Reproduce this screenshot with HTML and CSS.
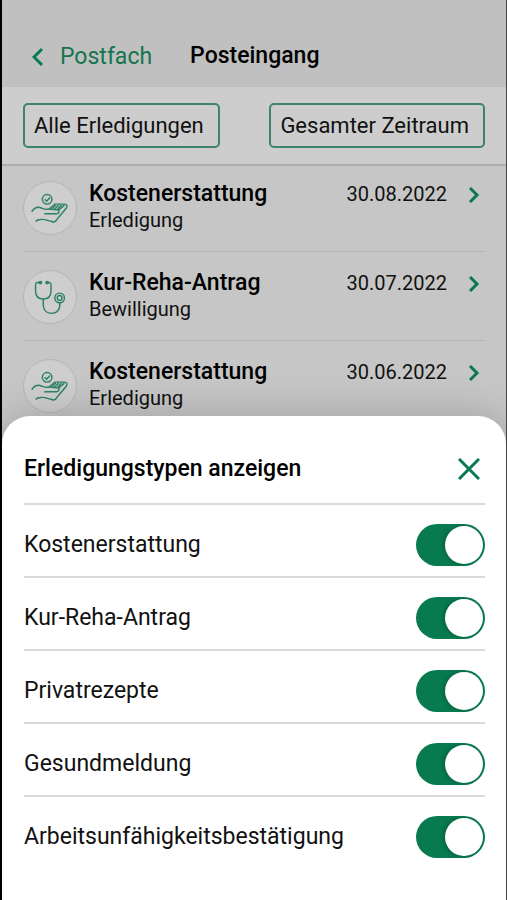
FILE: index.html
```html
<!DOCTYPE html>
<html lang="de">

<head>
    <meta charset="UTF-8" />
    <meta name="viewport" content="width=device-width, initial-scale=1.0" />
    <title>Posteingang</title>
    <link rel="stylesheet" href="styles.css">
</head>

<body>

    <!-- Icons -->
    <svg class="sprite" aria-hidden="true">
        <symbol id="icon-hand" viewBox="0 0 54 54">
            <circle cx="24" cy="18" r="5" />
            <path d="M21.5 18l2 2 3.5-4" />
            <path d="M8 31c2-4 6-6 10-4 3 1 5 2 8 1" />
            <path d="M26 28l6-5h10c3 0 3 2 2 4L34 39c-1 2-3 3-5 2-5-1-8-3-12-2-2 0-4 1-5 2" />
            <path d="M21 33h12c3 0 4-2 3-4l-10-1M36 29l6-5" />
            <path d="M29 28l4-4M32 28l4-4M35 28l4-4" />
        </symbol>
        <symbol id="icon-stethoscope" viewBox="0 0 54 54">
            <path d="M17 12h-3c-2 0-2 1-2 3v6c0 5 3 8 8 8s8-3 8-8v-6c0-2 0-3-2-3h-3" />
            <circle class="dot" cx="17" cy="12" r="2" />
            <circle class="dot" cx="24" cy="12" r="2" />
            <path d="M20 29v6c0 6 4 9 9 9s9-4 8-11" />
            <circle cx="37" cy="28" r="5" />
            <circle cx="37" cy="28" r="2.5" />
        </symbol>
        <symbol id="icon-chevron" viewBox="0 0 12 18">
            <path d="M2 2l7 7-7 7" />
        </symbol>
    </svg>

    <div class="screen">
        <header class="header">
            <a href="#" class="back">
                <svg class="back-icon" viewBox="0 0 12 20" aria-hidden="true"><path d="M10 2l-8 8 8 8" /></svg>
                Postfach
            </a>
            <h1>Posteingang</h1>
        </header>

        <div class="filters">
            <button type="button" class="filter-btn">Alle Erledigungen</button>
            <button type="button" class="filter-btn">Gesamter Zeitraum</button>
        </div>

        <ul class="messages">
            <li>
                <a href="#" class="message">
                    <svg class="avatar" aria-hidden="true"><use href="#icon-hand" /></svg>
                    <span class="message-text">
                        <strong>Kostenerstattung</strong>
                        <span>Erledigung</span>
                    </span>
                    <span class="date">30.08.2022</span>
                    <svg class="chevron" aria-hidden="true"><use href="#icon-chevron" /></svg>
                </a>
            </li>
            <li>
                <a href="#" class="message">
                    <svg class="avatar" aria-hidden="true"><use href="#icon-stethoscope" /></svg>
                    <span class="message-text">
                        <strong>Kur-Reha-Antrag</strong>
                        <span>Bewilligung</span>
                    </span>
                    <span class="date">30.07.2022</span>
                    <svg class="chevron" aria-hidden="true"><use href="#icon-chevron" /></svg>
                </a>
            </li>
            <li>
                <a href="#" class="message">
                    <svg class="avatar" aria-hidden="true"><use href="#icon-hand" /></svg>
                    <span class="message-text">
                        <strong>Kostenerstattung</strong>
                        <span>Erledigung</span>
                    </span>
                    <span class="date">30.06.2022</span>
                    <svg class="chevron" aria-hidden="true"><use href="#icon-chevron" /></svg>
                </a>
            </li>
        </ul>

        <section class="sheet">
            <div class="sheet-header">
                <h2>Erledigungstypen anzeigen</h2>
                <button type="button" class="close-btn" aria-label="Schließen">
                    <svg viewBox="0 0 22 22" aria-hidden="true"><path d="M1 1l20 20M21 1L1 21" /></svg>
                </button>
            </div>
            <label class="option">Kostenerstattung <input type="checkbox" class="toggle" checked></label>
            <label class="option">Kur-Reha-Antrag <input type="checkbox" class="toggle" checked></label>
            <label class="option">Privatrezepte <input type="checkbox" class="toggle" checked></label>
            <label class="option">Gesundmeldung <input type="checkbox" class="toggle" checked></label>
            <label class="option">Arbeitsunfähigkeitsbestätigung <input type="checkbox" class="toggle" checked></label>
        </section>
    </div>

</body>

</html>
```

FILE: styles.css
```css
* {
    box-sizing: border-box;
}

body {
    margin: 0;
    font-family: Roboto, sans-serif;
    font-size: 23px;
    color: #111;
}

h1,
h2 {
    margin: 0;
    font-size: 23px;
    font-weight: 500;
    color: #000;
}

a {
    color: inherit;
    text-decoration: none;
}

svg {
    fill: none;
    stroke: #087a50;
}

.sprite {
    display: none;
}

.screen {
    position: relative;
    height: 100vh;
    overflow: hidden;
    background: #c6c6c6;
    border-left: 2px solid #000;
    border-right: 1px solid #444;
}

.header {
    display: flex;
    align-items: flex-end;
    gap: 38px;
    height: 87px;
    padding: 0 30px 15px;
    background: #c0c0c0;
}

.header h1 {
    line-height: 32px;
}

.back {
    display: flex;
    align-items: center;
    gap: 16px;
    line-height: 30px;
    color: #16744f;
}

.back-icon {
    width: 12px;
    height: 20px;
    stroke-width: 3;
}

.filters {
    display: flex;
    justify-content: space-between;
    padding: 16px 21px;
    background: #cdcdcd;
    border-bottom: 2px solid #adadad;
}

.filter-btn {
    height: 45px;
    padding: 0 14px 0 9px;
    font: inherit;
    font-size: 22px;
    color: #111;
    background: none;
    border: 2px solid #3f8468;
    border-radius: 5px;
}

/* Messages */

.messages {
    margin: 0;
    padding: 2px 21px 0;
    list-style: none;
}

.messages li {
    border-bottom: 1px solid #b2b2b2;
}

.message {
    display: flex;
    align-items: flex-start;
    height: 88px;
    padding-top: 18px;
}

.messages li:first-child .message {
    height: 83px;
    padding-top: 13px;
}

.avatar {
    width: 54px;
    height: 54px;
    margin-right: 12px;
    background: #cecece;
    border: 1px solid #b5b5b5;
    border-radius: 50%;
    stroke-width: 1.5;
    stroke: #2c8262;
}

.dot {
    fill: #2c8262;
    stroke: none;
}

.message-text {
    display: flex;
    flex: 1;
    flex-direction: column;
    font-size: 20px;
    line-height: 26px;
}

.message-text strong {
    font-size: 23px;
    font-weight: 500;
    color: #000;
}

.date {
    font-size: 20px;
    line-height: 26px;
}

.chevron {
    width: 12px;
    height: 18px;
    margin: 5px 5px 0 21px;
    stroke-width: 3;
}

/* Bottom sheet */

.sheet {
    position: absolute;
    right: 0;
    bottom: 0;
    left: 0;
    padding: 0 21px 32px 22px;
    background: #fff;
    border-radius: 28px 28px 0 0;
    box-shadow: 0 0 40px rgba(0, 0, 0, 0.2);
}

.sheet-header {
    display: flex;
    justify-content: space-between;
    align-items: center;
    height: 89px;
    padding-top: 18px;
    border-bottom: 2px solid #dadada;
}

.close-btn {
    width: 32px;
    height: 32px;
    padding: 5px;
    background: none;
    border: none;
}

.close-btn svg {
    display: block;
    width: 22px;
    height: 22px;
    stroke-width: 3;
}

.option {
    display: flex;
    justify-content: space-between;
    align-items: center;
    height: 73px;
    padding-top: 9px;
    line-height: 28px;
    border-bottom: 2px solid #dadada;
}

.option:last-child {
    height: 71px;
    border-bottom: none;
}

.toggle {
    display: flex;
    align-items: center;
    justify-content: flex-end;
    appearance: none;
    width: 69px;
    height: 42px;
    margin: 0;
    padding: 2px;
    background: #087a50;
    border-radius: 21px;
}

.toggle::before {
    content: "";
    width: 38px;
    height: 38px;
    background: #fff;
    border-radius: 50%;
    box-shadow: -2px 0 4px rgba(0, 0, 0, 0.2);
}

.toggle:not(:checked) {
    justify-content: flex-start;
    background: #aaa;
}
```
